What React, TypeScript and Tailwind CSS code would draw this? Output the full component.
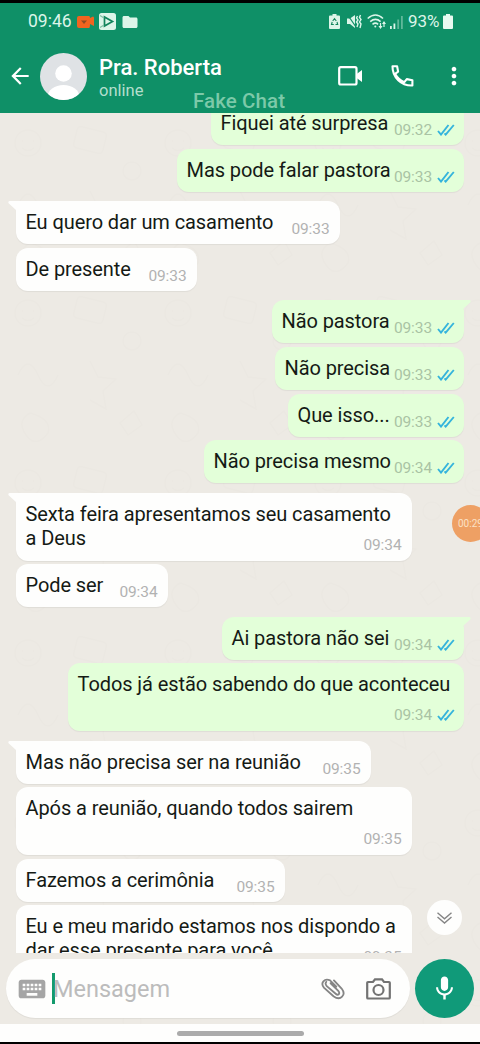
import type { ReactNode } from "react"
import { MdArrowBack, MdFolder, MdKeyboard, MdMic, MdMoreVert } from "react-icons/md"

type Message = {
  text: string[]
  time: string
  sent?: boolean
  tail?: boolean
  tall?: boolean
  width: string
  gap: string
}

const messages: Message[] = [
  { text: ["Fiquei até surpresa"], time: "09:32", sent: true, width: "w-[253px]", gap: "mt-[-11px]" },
  { text: ["Mas pode falar pastora"], time: "09:33", sent: true, width: "w-[287px]", gap: "mt-[4px]" },
  { text: ["Eu quero dar um casamento"], time: "09:33", tail: true, width: "w-[324px]", gap: "mt-[9px]" },
  { text: ["De presente"], time: "09:33", width: "w-[181px]", gap: "mt-[4px]" },
  { text: ["Não pastora"], time: "09:33", sent: true, tail: true, width: "w-[192px]", gap: "mt-[9px]" },
  { text: ["Não precisa"], time: "09:33", sent: true, width: "w-[189px]", gap: "mt-[4px]" },
  { text: ["Que isso..."], time: "09:33", sent: true, width: "w-[176px]", gap: "mt-[4px]" },
  { text: ["Não precisa mesmo"], time: "09:34", sent: true, width: "w-[260px]", gap: "mt-[3px]" },
  { text: ["Sexta feira apresentamos seu casamento", "a Deus"], time: "09:34", tail: true, tall: true, width: "w-[396px]", gap: "mt-[10px]" },
  { text: ["Pode ser"], time: "09:34", width: "w-[152px]", gap: "mt-[3px]" },
  { text: ["Ai pastora não sei"], time: "09:34", sent: true, tail: true, width: "w-[242px]", gap: "mt-[10px]" },
  { text: ["Todos já estão sabendo do que aconteceu"], time: "09:34", sent: true, tall: true, width: "w-[396px]", gap: "mt-[3px]" },
  { text: ["Mas não precisa ser na reunião"], time: "09:35", tail: true, width: "w-[355px]", gap: "mt-[10px]" },
  { text: ["Após a reunião, quando todos sairem"], time: "09:35", tall: true, width: "w-[396px]", gap: "mt-[3px]" },
  { text: ["Fazemos a cerimônia"], time: "09:35", width: "w-[269px]", gap: "mt-[4px]" },
  { text: ["Eu e meu marido estamos nos dispondo a", "dar esse presente para você"], time: "09:35", tall: true, width: "w-[396px]", gap: "mt-[3px]" },
]

function Ticks() {
  return (
    <svg className="w-[18px] h-[12px]" viewBox="0 0 18 12" fill="none" stroke="#35b4dc" strokeWidth="1.9">
      <path d="M1 7l3 3.6L11.5 1M7.5 9.3l1.2 1.3L16.8 1" />
    </svg>
  )
}

function Bubble({ message }: { message: Message }) {
  const { text, time, sent, tail, tall, width, gap } = message
  return (
    <div
      className={`relative shrink-0 rounded-[12px] shadow-[0_1px_1px_rgba(0,0,0,0.06)] ${width} ${gap} ${
        tall ? "h-[68px]" : "h-[43px]"
      } ${sent ? "self-end bg-[#e3ffd9]" : "self-start bg-[#fefefd]"}`}
    >
      {tail && (
        <svg
          className={`absolute top-0 w-[20px] h-[14px] ${sent ? "right-[-7px] -scale-x-100" : "left-[-8px]"}`}
          viewBox="0 0 20 14"
        >
          <path d="M2 0h18v14H8V9L.6 2.2Q-.3 0 2 0z" fill={sent ? "#e3ffd9" : "#fefefd"} />
        </svg>
      )}
      <div className="relative pt-[9px] pl-[9.5px] text-[20px] leading-[24px] tracking-[-0.085px] text-[#151a15] whitespace-nowrap">
        {text.map((line) => (
          <p key={line}>{line}</p>
        ))}
      </div>
      <div
        className={`absolute flex items-center gap-[5px] text-[15.5px] leading-[20px] tracking-[-0.1px] ${
          tall ? "bottom-[6px]" : "bottom-[5px]"
        } ${sent ? "right-[9px] text-[#a9c3a4]" : "right-[10.5px] text-[#b2b2b2]"}`}
      >
        <span>{time}</span>
        {sent && <Ticks />}
      </div>
    </div>
  )
}

function Wallpaper() {
  return (
    <svg className="absolute inset-0 w-full h-full" fill="none" stroke="#e5e1da" strokeWidth="1.5">
      <defs>
        <pattern id="doodles" width="150" height="170" patternUnits="userSpaceOnUse">
          <circle cx="28" cy="30" r="13" />
          <path d="M22 28h1M33 28h1M22 35q6 5 12 0" />
          <rect x="75" y="16" width="30" height="22" rx="4" transform="rotate(14 90 27)" />
          <path d="M18 92q10-22 20 0t20 0M90 78l8 16 18 2-13 12 3 18-16-9" />
          <path d="M30 130q-14 8-4 22t22-2q4-14-18-20zM120 140l14-12 8 14-14 10z" />
          <circle cx="132" cy="58" r="9" />
        </pattern>
      </defs>
      <rect width="480" height="911" fill="url(#doodles)" stroke="none" opacity="0.22" />
    </svg>
  )
}

function StatusBar() {
  return (
    <div className="flex h-[37px] items-center pl-[28px] pr-[27px] text-[17.5px] text-[#dcf5e9]">
      <span className="w-[49px]">09:46</span>
      <svg className="w-[17px] h-[12px]" viewBox="0 0 17 12">
        <path d="M2 0h10q1 0 1 2l3-1.500q1 0 1 1.500v8l-4-2q0 4-1 4H2Q0 12 0 10V2Q0 0 2 0z" fill="#f2641f" />
        <path d="M4 4.500h6L7 8z" fill="#8f4b22" />
      </svg>
      <svg className="ml-[5px] w-[17px] h-[17px]" viewBox="0 0 17 17">
        <rect width="17" height="17" rx="2.500" fill="#dcf5e9" />
        <path d="M5.500 4v9l8-4.500z" fill="none" stroke="#12845c" strokeWidth="1.700" />
        <path d="M1 2.500l4 2.500M1 14.500l4-2.500" fill="none" stroke="#7fbfa4" strokeWidth="1.200" />
      </svg>
      <MdFolder className="ml-[5px] h-[18px] w-[18px]" />
      <div className="ml-auto flex items-center">
        <svg className="w-[11px] h-[15px]" viewBox="0 0 11 15">
          <path d="M3.500 0h4v1.500H10q1 0 1 1V14q0 1-1 1H1q-1 0-1-1V2.500q0-1 1-1h2.500z" fill="#dcf5e9" />
          <path d="M3.700 7l1.800-2.300L7.300 7M8 8l.7 2.500H6.500M4.800 10.500H2.500L3.200 8" fill="none" stroke="#12845c" strokeWidth="1.100" />
        </svg>
        <svg className="ml-[7px] w-[15px] h-[15px]" viewBox="0 0 15 15" fill="none" stroke="#dcf5e9">
          <path d="M0 4.500h3L8 1v13l-5-4H0z" fill="#dcf5e9" stroke="none" />
          <path d="M0 0l9 13" stroke="#0f9067" strokeWidth="1.200" />
          <path d="M10.500 2l-1 2 1.500 2-1.500 2 1.500 2-1 3M13.500 1l-1 2.500 1.500 2-1.500 2.500 1.500 2-1 4" strokeWidth="1.400" />
        </svg>
        <svg className="ml-[5px] w-[19px] h-[15px]" viewBox="0 0 19 15" fill="none" stroke="#dcf5e9" strokeWidth="1.600">
          <path d="M.7 4.500Q8.500-2.500 16 4.500M3.200 7.600q5.300-4.500 10.400 0M5.500 10.300q3-2.300 5.600 0" />
          <circle cx="8.300" cy="12.500" r="1" fill="#dcf5e9" stroke="none" />
          <path d="M13.500 9v5M17 8v5" strokeWidth="1.200" />
          <path d="M11.500 12l2 3 2-3zM15 10l2-3 2 3z" fill="#dcf5e9" stroke="none" />
        </svg>
        <svg className="ml-[4px] w-[13px] h-[14px]" viewBox="0 0 13 14" fill="#dcf5e9">
          <path d="M0 11h1.800v3H0zM3.500 8.500h1.800V14H3.500z" />
          <path d="M7.300 4.500h1.800V14H7.300zM11 1h1.800v13H11z" opacity=".4" />
        </svg>
        <span className="ml-[5px] w-[35px] text-[17px]">93%</span>
        <svg className="w-[10px] h-[15px]" viewBox="0 0 10 15" fill="#e8faf1">
          <path d="M3 0h4v1.500h2q1 0 1 1V14q0 1-1 1H1q-1 0-1-1V2.500q0-1 1-1h2z" />
        </svg>
      </div>
    </div>
  )
}

function Header() {
  return (
    <header className="relative h-[110px] shrink-0 bg-[#0f9067]">
      <StatusBar />
      <div className="flex h-[72px] items-center pl-[7px]">
        <MdArrowBack className="w-[26px] h-[26px] text-white" />
        <svg className="ml-[7px] w-[47px] h-[47px]" viewBox="0 0 47 47">
          <clipPath id="face">
            <circle cx="23.500" cy="23.500" r="23.500" />
          </clipPath>
          <g clipPath="url(#face)">
            <rect width="47" height="47" fill="#dfe2e5" />
            <circle cx="23.500" cy="20.500" r="8.300" fill="#fff" />
            <ellipse cx="23.500" cy="44" rx="16" ry="12" fill="#fff" />
          </g>
        </svg>
        <div className="ml-[12px] w-[240px] pt-[2px]">
          <p className="text-[22px] leading-[26px] font-medium text-white">Pra. Roberta</p>
          <p className="text-[16.500px] leading-[19px] text-[#b4dfcd]">online</p>
        </div>
        <svg className="ml-[-1px] w-[25px] h-[20px]" viewBox="0 0 25 20">
          <rect x="1.200" y="1.200" width="17.300" height="17.300" rx="1.500" fill="none" stroke="#fff" strokeWidth="2.200" />
          <path d="M18 8.500L24 4v12l-6-4.500z" fill="#fff" />
        </svg>
        <svg className="ml-[28px] w-[23px] h-[22px]" viewBox="0 0 23 22" fill="none" stroke="#fff" strokeWidth="2.100" strokeLinejoin="round">
          <path d="M1.500 1.300h4.600l1 5.300-3 2.200q3 5.800 9.200 8.300l2.500-3 5.600 1.200v5.200Q13 20.800 7.200 15.200T1.500 1.300z" />
        </svg>
        <MdMoreVert className="ml-[26px] w-[28px] h-[28px] text-white" />
      </div>
      <p className="absolute left-[193px] top-[86px] text-[20.500px] leading-[24px] font-medium tracking-[0.1px] text-[#7cc9a9]">
        Fake Chat
      </p>
    </header>
  )
}

function RoundButton({ className, children }: { className: string; children: ReactNode }) {
  return <button className={`flex items-center justify-center rounded-full ${className}`}>{children}</button>
}

function Composer() {
  return (
    <div className="relative flex h-[71px] shrink-0 items-start gap-[5px] pl-[6px] pt-[6px]">
      <div className="flex h-[59px] w-[404px] items-center rounded-full bg-[#fefefd] pl-[10px] shadow-[0_1px_1px_rgba(0,0,0,0.06)]">
        <MdKeyboard className="w-[32px] h-[32px] text-[#a5a5a5]" />
        <div className="ml-[4px] h-[31px] w-[3px] bg-[#149a6d]" />
        <p className="ml-[-2px] w-[267px] pt-[1px] text-[23.500px] leading-[28px] text-[#bcbcbc]">Mensagem</p>
        <svg className="ml-px w-[24px] h-[22px]" viewBox="0 0 25 23" fill="none" stroke="#858585" strokeWidth="1.900" strokeLinecap="round">
          <path d="M10 5.500l8 8q1.800 2.200.5 3.500t-3.200-.5L6 8.500Q3.800 6 5.500 4M13.500 2.500l8 8.500q4 5 .5 8.500t-9-.5L3 10Q0 6.500 2.500 3.500T9.500 2.500L16 9" />
        </svg>
        <svg className="ml-[21px] w-[25px] h-[22px]" viewBox="0 0 25 22" fill="none" stroke="#737373" strokeWidth="2.200">
          <path d="M2 4h5l2-2.700h7L18 4h5q.8 0 .8.800v14.900q0 .8-.8.800H2q-.8 0-.8-.8V4.800Q1.200 4 2 4z" />
          <circle cx="12.500" cy="12" r="5" />
        </svg>
      </div>
      <RoundButton className="h-[59px] w-[59px] bg-[#109a79]">
        <MdMic className="w-[29px] h-[29px] text-white" />
      </RoundButton>
    </div>
  )
}

export default function App() {
  return (
    <div className="flex h-[1044px] w-[480px] flex-col overflow-hidden bg-black pt-[3px] font-['Roboto',sans-serif]">
      <Header />
      <main className="relative flex h-[911px] shrink-0 flex-col overflow-hidden bg-[#edeae4]">
        <Wallpaper />
        <div className="relative flex h-[840px] shrink-0 flex-col overflow-hidden px-[16px]">
          {messages.map((message, i) => (
            <Bubble key={i} message={message} />
          ))}
        </div>
        <Composer />
        <div className="absolute left-[452px] top-[392px] flex h-[37px] w-[37px] items-center rounded-full bg-[#eea064] pl-[6px] text-[10px] text-[#fbe0c4]">
          00:29
        </div>
        <RoundButton className="absolute left-[427px] top-[787px] h-[35px] w-[35px] bg-[#fefefd]">
          <svg className="w-[15px] h-[12px]" viewBox="0 0 15 12" fill="none" stroke="#858585" strokeWidth="1.400">
            <path d="M.5.800l7 6 7-6M.5 5l7 6 7-6" />
          </svg>
        </RoundButton>
      </main>
      <div className="flex h-[18px] shrink-0 items-center justify-center bg-[#fefefd]">
        <div className="h-[5px] w-[127px] rounded-full bg-[#ababab]" />
      </div>
    </div>
  )
}
